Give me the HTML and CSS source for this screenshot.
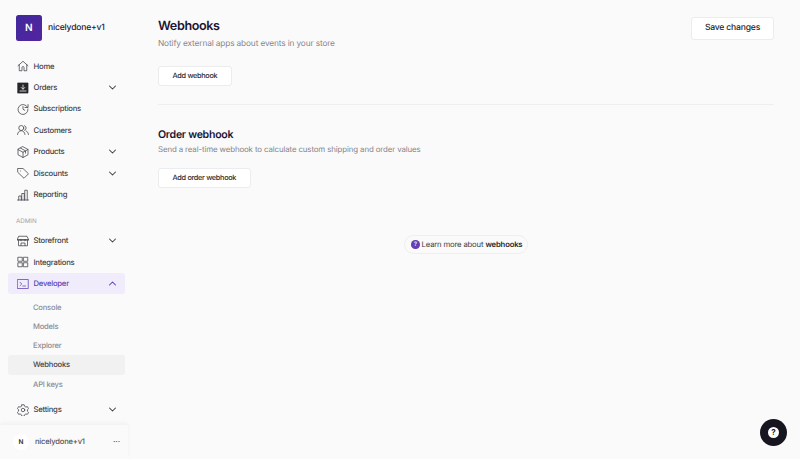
FILE: index.html
```html
<!DOCTYPE html>
<html lang="en">
<head>
<meta charset="utf-8">
<title>Webhooks</title>
<link rel="stylesheet" href="styles.css">
</head>
<body>
<div class="app">
  <aside class="sidebar">
    <div class="brand"><div class="logo">N</div><span class="brand-name">nicelydone+v1</span></div>
    <nav class="nav">
      <a class="item"><svg class="ic" viewBox="0 0 24 24"><path d="M2 11.500 12 2.500l10 9M4.500 9.500V21.500h5.500v-6.500a2 2 0 0 1 4 0v6.500h5.500V9.500"/></svg><span class="label">Home</span></a>
      <a class="item"><svg class="ic" viewBox="0 0 24 24"><path class="solid" d="M2 2h20v20H2z"/><path class="inv" d="M12 6v8M8.500 11l3.500 3.500 3.500-3.500M6 18h12"/></svg><span class="label">Orders</span><svg class="chev" viewBox="0 0 12 12"><path d="m2 4 4 4 4-4"/></svg></a>
      <a class="item"><svg class="ic" viewBox="0 0 24 24"><path d="M21 8.500A10 10 0 1 0 22 12M22 3v6h-6M12 7v5.500l3.500 2"/></svg><span class="label">Subscriptions</span></a>
      <a class="item"><svg class="ic" viewBox="0 0 24 24"><circle cx="8.500" cy="8" r="5"/><path d="M1 21c.5-4.500 3.500-7.500 7.500-7.500s7 3 7.500 7.500M15 3.300a5 5 0 0 1 0 9.400M18 14c2.800.8 4.500 3.300 5 7"/></svg><span class="label">Customers</span></a>
      <a class="item"><svg class="ic" viewBox="0 0 24 24"><path d="m12 1.500 10 5.500v10.500l-10 5.500-10-5.500V7zM2 7l10 5.500L22 7M12 12.500V23M7 4.200l10 5.500v4.500"/></svg><span class="label">Products</span><svg class="chev" viewBox="0 0 12 12"><path d="m2 4 4 4 4-4"/></svg></a>
      <a class="item"><svg class="ic" viewBox="0 0 24 24"><path d="M2 3h10l11 10.500-9 9L2 11zM7 8h.01"/></svg><span class="label">Discounts</span><svg class="chev" viewBox="0 0 12 12"><path d="m2 4 4 4 4-4"/></svg></a>
      <a class="item"><svg class="ic" viewBox="0 0 24 24"><path d="M1 22h22M3.500 22v-8h5v8M9.500 22V9h5v13M15.500 22V2.500h5V22"/></svg><span class="label">Reporting</span></a>
      <div class="section">ADMIN</div>
      <a class="item"><svg class="ic" viewBox="0 0 24 24"><path d="M4 2.500h16L23 9v1.500H1V9zM1 9h22M8 9v2.500M16 9v2.500M3 11v10.500h18V11M8 21v-5h8v5"/></svg><span class="label">Storefront</span><svg class="chev" viewBox="0 0 12 12"><path d="m2 4 4 4 4-4"/></svg></a>
      <a class="item"><svg class="ic" viewBox="0 0 24 24"><path d="M2.500 2.500h8v8h-8zM13.500 2.500h8v8h-8zM2.500 13.500h8v8h-8zM13.500 13.500h8v8h-8z"/></svg><span class="label">Integrations</span></a>
      <a class="item active"><svg class="ic" viewBox="0 0 24 24"><path d="M1.500 3h21v18h-21zM6 8.500l3.500 3.500L6 15.500M11.500 16H17"/></svg><span class="label">Developer</span><svg class="chev" viewBox="0 0 12 12"><path d="m2 8 4-4 4 4"/></svg></a>
      <div class="sub">
        <a class="sub-item">Console</a>
        <a class="sub-item">Models</a>
        <a class="sub-item">Explorer</a>
        <a class="sub-item current">Webhooks</a>
        <a class="sub-item">API keys</a>
      </div>
      <a class="item"><svg class="ic" viewBox="0 0 24 24"><circle cx="12" cy="12" r="3.500"/><path d="M9.700 1.500h4.600l.8 3 2.700 1.600 3-.8 2.300 4-2.200 2.200v3l2.200 2.200-2.300 4-3-.8-2.700 1.600-.8 3H9.700l-.8-3-2.700-1.600-3 .8-2.300-4 2.200-2.200v-3L.9 9.300l2.300-4 3 .8 2.700-1.600z"/></svg><span class="label">Settings</span><svg class="chev" viewBox="0 0 12 12"><path d="m2 4 4 4 4-4"/></svg></a>
    </nav>
    <div class="account"><div class="avatar">N</div><span class="account-name">nicelydone+v1</span><span class="dots">···</span></div>
  </aside>
  <main class="main">
    <section class="head">
      <div class="head-text">
        <h1 class="title">Webhooks</h1>
        <p class="desc">Notify external apps about events in your store</p>
      </div>
      <button class="btn save">Save changes</button>
    </section>
    <button class="btn add">Add webhook</button>
    <hr class="rule">
    <h2 class="subtitle">Order webhook</h2>
    <p class="desc2">Send a real-time webhook to calculate custom shipping and order values</p>
    <button class="btn add">Add order webhook</button>
    <div class="learn-row"><a class="learn"><span class="q">?</span>Learn more about <b>webhooks</b></a></div>
  </main>
</div>
<button class="help"><span class="help-q">?</span></button>
</body>
</html>
```
FILE: styles.css
```css
* { box-sizing: border-box; }
html, body { margin: 0; height: 100%; }
body { background: #fafafa; font-family: Inter, "Liberation Sans", sans-serif; color: #1f1a33; overflow: hidden; text-rendering: geometricPrecision; }
.app { display: flex; height: 459px; }
.sidebar { width: 133px; flex: none; display: flex; flex-direction: column; padding: 0 8px; position: relative; }
.brand { display: flex; align-items: flex-start; gap: 6.500px; padding: 15px 8px 0; height: 55.500px; }
.logo { width: 25.500px; height: 26px; border-radius: 2.500px; background: linear-gradient(135deg, #3f2a9c, #54249f); color: #fff; font-size: 10px; font-weight: 600; display: flex; align-items: center; justify-content: center; }
.brand-name { font-size: 8.600px; letter-spacing: -.2px; font-weight: 500; color: #1f1a33; line-height: 26px; }
.nav { display: flex; flex-direction: column; }
.item { display: flex; align-items: center; height: 21.400px; padding: 0 8px 0 9px; border-radius: 3px; font-size: 7.700px; letter-spacing: -.24px; font-weight: 500; color: #3f3f46; }
.label { flex: 1; margin-left: 4.500px; }
.ic { width: 12px; height: 12px; fill: none; stroke: #3f3f46; stroke-width: 1.500; stroke-linejoin: round; stroke-linecap: round; flex: none; }
.ic .solid { fill: #27272a; stroke: #27272a; }
.ic .inv { stroke: #fff; }
.chev { width: 9px; height: 9px; fill: none; stroke: #3f3f46; stroke-width: 1.400; stroke-linecap: round; stroke-linejoin: round; flex: none; }
.section { font-size: 6.200px; color: #a1a1aa; margin: 8px 0 0 8px; height: 17px; line-height: 10px; padding-top: 4px; }
.active { background: #f1ecfc; color: #5b3fb0; }
.active .ic, .active .chev { stroke: #5b3fb0; }
.sub { display: flex; flex-direction: column; padding-top: 3.400px; margin-bottom: 5.400px; }
.sub-item { height: 19.200px; line-height: 19.200px; padding-left: 25px; font-size: 7.600px; letter-spacing: -.2px; font-weight: 500; color: #8b8b93; border-radius: 3px; }
.current { background: #f1f1f2; color: #3f3f46; }
.account { position: absolute; left: 0; right: 5px; bottom: 0; height: 34.500px; background: #fafafa; box-shadow: 0 -2px 4px rgba(0,0,0,.04); display: flex; align-items: center; padding: 0 8px 0 13px; }
.avatar { width: 16px; height: 16px; border-radius: 50%; background: #fff; font-size: 6.500px; font-weight: 600; display: flex; align-items: center; justify-content: center; color: #27272a; }
.account-name { flex: 1; margin-left: 6px; font-size: 7.600px; letter-spacing: -.2px; font-weight: 500; color: #52525b; }
.dots { font-size: 7px; font-weight: 700; color: #52525b; }
.main { flex: 1; padding: 0 26px 0 25px; min-width: 0; }
.head { display: flex; justify-content: space-between; align-items: flex-start; height: 66px; padding-top: 17.500px; }
.title { margin: 0; font-size: 12.600px; letter-spacing: -.38px; line-height: 17px; font-weight: 600; color: #1c1533; }
.desc { margin: 3px 0 0; font-size: 8.300px; letter-spacing: -.14px; line-height: 12px; color: #85858c; }
.btn { display: block; font-family: inherit; text-rendering: inherit; background: #fff; border: 1px solid #ececee; border-radius: 3px; font-weight: 500; color: #27272a; }
.save { height: 22.500px; width: 83px; font-size: 8.600px; letter-spacing: -.2px; margin-top: -.5px; }
.add { height: 19.500px; padding: 0 13.500px; font-size: 7.300px; letter-spacing: -.3px; }
.rule { border: 0; height: 1px; background: #efeff0; margin: 18.500px 0 0; }
.subtitle { margin: 22.500px 0 0; font-size: 10.600px; letter-spacing: -.28px; line-height: 14px; font-weight: 600; color: #1c1533; }
.desc2 { margin: .5px 0 12px; font-size: 7.900px; letter-spacing: -.13px; line-height: 14px; color: #85858c; }
.learn-row { display: flex; justify-content: center; margin-top: 47.500px; }
.learn { display: flex; align-items: center; height: 19px; padding: 0 5px 0 6.500px; border: 1px solid #efeff0; border-radius: 10px; font-size: 7.700px; letter-spacing: -.17px; color: #3f3f46; background: #fafafa; }
.learn b { font-weight: 600; margin-left: 2.200px; color: #27272a; }
.q { width: 8.500px; height: 8.500px; border-radius: 50%; background: #6440b5; color: #e5dcf8; font-size: 6px; font-weight: 700; display: flex; align-items: center; justify-content: center; margin-right: 2px; }
.help { position: absolute; left: 760px; top: 419px; width: 27px; height: 27px; border-radius: 50%; border: 0; background: #17151f; padding: 0; display: flex; align-items: center; justify-content: center; }
.help-q { width: 11px; height: 11px; border-radius: 50%; background: #fff; color: #17151f; font-family: Inter, sans-serif; font-size: 8px; font-weight: 700; line-height: 11px; }
```
